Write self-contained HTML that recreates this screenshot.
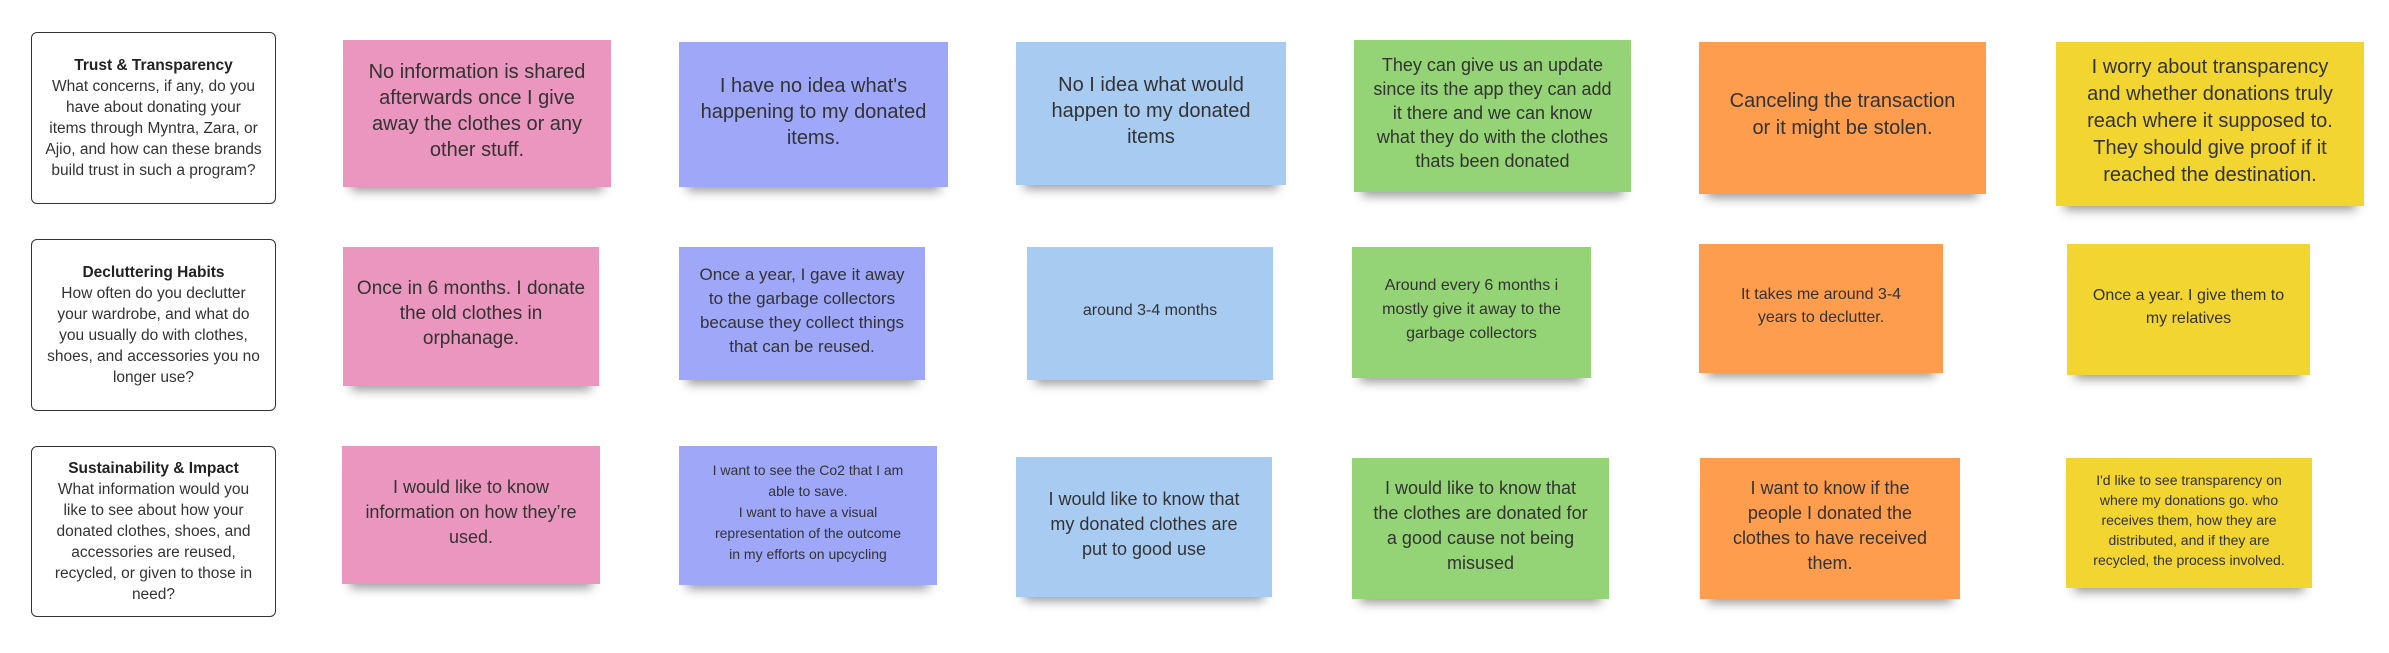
<!DOCTYPE html>
<html><head><meta charset="utf-8"><style>
html,body{margin:0;padding:0;background:#fff;width:2389px;height:653px;overflow:hidden;position:relative;font-family:"Liberation Sans",sans-serif;color:#333;}
.q{position:absolute;left:31px;width:245px;border:1.5px solid #333;border-radius:6px;box-sizing:border-box;display:flex;align-items:center;justify-content:center;text-align:center;font-size:15.5px;line-height:21px;color:#333;padding:0 4px;white-space:nowrap;}
.q b{color:#222;}
.s{position:absolute;display:flex;align-items:center;justify-content:center;text-align:center;box-sizing:border-box;padding:0 6px 6px;box-shadow:0 12px 10px -8px rgba(0,0,0,.4);color:#333;white-space:nowrap;}
.p{background:#ea96be}.u{background:#9ea7f8}.b{background:#a8cbf2}.g{background:#94d376}.o{background:#fd9d4d}.y{background:#f2d531}
</style></head><body>
<div class="q" style="top:32px;height:172px"><div><b>Trust &amp; Transparency</b><br>What concerns, if any, do you<br>have about donating your<br>items through Myntra, Zara, or<br>Ajio, and how can these brands<br>build trust in such a program?</div></div>
<div class="q" style="top:239px;height:172px"><div><b>Decluttering Habits</b><br>How often do you declutter<br>your wardrobe, and what do<br>you usually do with clothes,<br>shoes, and accessories you no<br>longer use?</div></div>
<div class="q" style="top:446px;height:171px"><div><b>Sustainability &amp; Impact</b><br>What information would you<br>like to see about how your<br>donated clothes, shoes, and<br>accessories are reused,<br>recycled, or given to those in<br>need?</div></div>

<div class="s p" style="left:343px;top:40px;width:268px;height:147px;font-size:20px;line-height:26px">No information is shared<br>afterwards once I give<br>away the clothes or any<br>other stuff.</div>
<div class="s u" style="left:679px;top:42px;width:269px;height:145px;font-size:20px;line-height:26px">I have no idea what's<br>happening to my donated<br>items.</div>
<div class="s b" style="left:1016px;top:42px;width:270px;height:143px;font-size:20px;line-height:26px">No I idea what would<br>happen to my donated<br>items</div>
<div class="s g" style="left:1354px;top:40px;width:277px;height:152px;font-size:18px;line-height:24px">They can give us an update<br>since its the app they can add<br>it there and we can know<br>what they do with the clothes<br>thats been donated</div>
<div class="s o" style="left:1699px;top:42px;width:287px;height:152px;font-size:20px;line-height:27px">Canceling the transaction<br>or it might be stolen.</div>
<div class="s y" style="left:2056px;top:42px;width:308px;height:164px;font-size:20px;line-height:27px">I worry about transparency<br>and whether donations truly<br>reach where it supposed to.<br>They should give proof if it<br>reached the destination.</div>

<div class="s p" style="left:343px;top:247px;width:256px;height:139px;font-size:19px;line-height:25px">Once in 6 months. I donate<br>the old clothes in<br>orphanage.</div>
<div class="s u" style="left:679px;top:247px;width:246px;height:133px;font-size:17px;line-height:24px">Once a year, I gave it away<br>to the garbage collectors<br>because they collect things<br>that can be reused.</div>
<div class="s b" style="left:1027px;top:247px;width:246px;height:133px;font-size:16px;line-height:24px">around 3-4 months</div>
<div class="s g" style="left:1352px;top:247px;width:239px;height:131px;font-size:16px;line-height:24px">Around every 6 months i<br>mostly give it away to the<br>garbage collectors</div>
<div class="s o" style="left:1699px;top:244px;width:244px;height:129px;font-size:16px;line-height:23px">It takes me around 3-4<br>years to declutter.</div>
<div class="s y" style="left:2067px;top:244px;width:243px;height:131px;font-size:16px;line-height:23px">Once a year. I give them to<br>my relatives</div>

<div class="s p" style="left:342px;top:446px;width:258px;height:138px;font-size:18px;line-height:25px">I would like to know<br>information on how they’re<br>used.</div>
<div class="s u" style="left:679px;top:446px;width:258px;height:139px;font-size:14px;line-height:21px">I want to see the Co2 that I am<br>able to save.<br>I want to have a visual<br>representation of the outcome<br>in my efforts on upcycling</div>
<div class="s b" style="left:1016px;top:457px;width:256px;height:140px;font-size:18px;line-height:25px">I would like to know that<br>my donated clothes are<br>put to good use</div>
<div class="s g" style="left:1352px;top:458px;width:257px;height:141px;font-size:18px;line-height:25px">I would like to know that<br>the clothes are donated for<br>a good cause not being<br>misused</div>
<div class="s o" style="left:1700px;top:458px;width:260px;height:141px;font-size:18px;line-height:25px">I want to know if the<br>people I donated the<br>clothes to have received<br>them.</div>
<div class="s y" style="left:2066px;top:458px;width:246px;height:130px;font-size:14px;line-height:20px">I'd like to see transparency on<br>where my donations go. who<br>receives them, how they are<br>distributed, and if they are<br>recycled, the process involved.</div>
</body></html>
